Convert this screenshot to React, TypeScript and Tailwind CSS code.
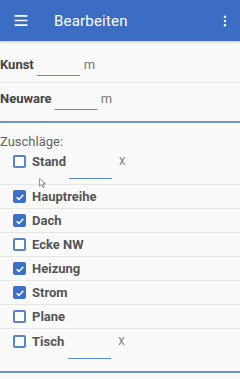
import React from "react";

function Box({ checked }: { checked: boolean }) {
  return checked ? (
    <span className="flex h-[13px] w-[13px] shrink-0 items-center justify-center rounded-[2px] bg-[#3d6fc8]">
      <svg viewBox="0 0 12 12" className="h-[10px] w-[10px]">
        <path d="M2 6.2 L4.8 9 L10 3.4" fill="none" stroke="white" strokeWidth="1.8" />
      </svg>
    </span>
  ) : (
    <span className="block h-[13px] w-[13px] shrink-0 rounded-[2px] border-2 border-[#5b83cc] bg-white" />
  );
}

function Row({ label, checked }: { label: string; checked: boolean }) {
  return (
    <div className="flex h-[24px] items-center gap-[6px] border-b border-[#e6e6e6] pl-[13px]">
      <Box checked={checked} />
      <span className="text-[13px] font-bold text-[#555]">{label}</span>
    </div>
  );
}

function Underline({ w, top }: { w: string; top: string }) {
  return (
    <span className="flex flex-col">
      <span className={top} />
      <span className={`block h-[1px] ${w} bg-[#5a86cc]`} />
    </span>
  );
}

export default function App() {
  return (
    <div className="relative h-[379px] w-[240px] overflow-hidden bg-[#fafafa] font-['Roboto',sans-serif] leading-[20px]">
      <div className="flex h-[41px] items-center bg-[#3a6dc3] px-[14px] text-white shadow-[0_1px_3px_rgba(0,0,0,0.2)]">
        <svg viewBox="0 0 14 12" className="h-[11px] w-[14px]">
          <path d="M0 1h14M0 6h14M0 11h14" stroke="white" strokeWidth="1.8" />
        </svg>
        <span className="ml-[26px] text-[15px] tracking-[0.2px]">Bearbeiten</span>
        <svg viewBox="0 0 4 14" className="ml-auto mr-[-1px] h-[12px] w-[4px]">
          <circle cx="2" cy="2" r="1.4" fill="white" />
          <circle cx="2" cy="7" r="1.4" fill="white" />
          <circle cx="2" cy="12" r="1.4" fill="white" />
        </svg>
      </div>

      <div className="flex h-[42px] items-start gap-[3px] border-b border-[#e6e6e6] pt-[14px] text-[13px]">
        <span className="font-bold text-[#444]">Kunst</span>
        <Underline w="w-[43px]" top="h-[20px]" />
        <span className="ml-[1px] text-[#777]">m</span>
      </div>
      <div className="flex h-[40px] items-start gap-[3px] border-b-2 border-[#6d93cf] pt-[6px] text-[13px]">
        <span className="font-bold text-[#444]">Neuware</span>
        <Underline w="w-[42px]" top="h-[20px]" />
        <span className="ml-[1px] text-[#777]">m</span>
      </div>

      <div className="h-[28px] pt-[11px] text-[13px] leading-[16px] text-[#666]">Zuschläge:</div>
      <div className="flex h-[34px] items-start gap-[6px] border-b border-[#e6e6e6] pl-[13px] pt-[1px]">
        <span className="mt-[3px]"><Box checked={false} /></span>
        <span className="text-[13px] font-bold text-[#555]">Stand</span>
        <span className="ml-[-3px]"><Underline w="w-[43px]" top="h-[26px]" /></span>
        <span className="ml-[1px] text-[10px] text-[#777]">X</span>
      </div>
      <Row label="Hauptreihe" checked />
      <Row label="Dach" checked />
      <Row label="Ecke NW" checked={false} />
      <Row label="Heizung" checked />
      <Row label="Strom" checked />
      <Row label="Plane" checked={false} />
      <div className="flex h-[44px] items-start gap-[6px] border-b-2 border-[#6d93cf] pl-[13px] pt-[3px]">
        <span className="mt-[3px]"><Box checked={false} /></span>
        <span className="text-[13px] font-bold text-[#555]">Tisch</span>
        <span className="ml-[-2px]"><Underline w="w-[43px]" top="h-[26px]" /></span>
        <span className="ml-[1px] text-[10px] text-[#777]">X</span>
      </div>

      <svg viewBox="0 0 8 12" className="absolute left-[39px] top-[178px] h-[10px] w-[7px]">
        <path d="M0.5 0.5 L0.5 10 L3 7.6 L4.8 11.5 L6.2 10.8 L4.5 7 L7.5 7 Z" fill="white" stroke="#555" strokeWidth="0.8" />
      </svg>
    </div>
  );
}
